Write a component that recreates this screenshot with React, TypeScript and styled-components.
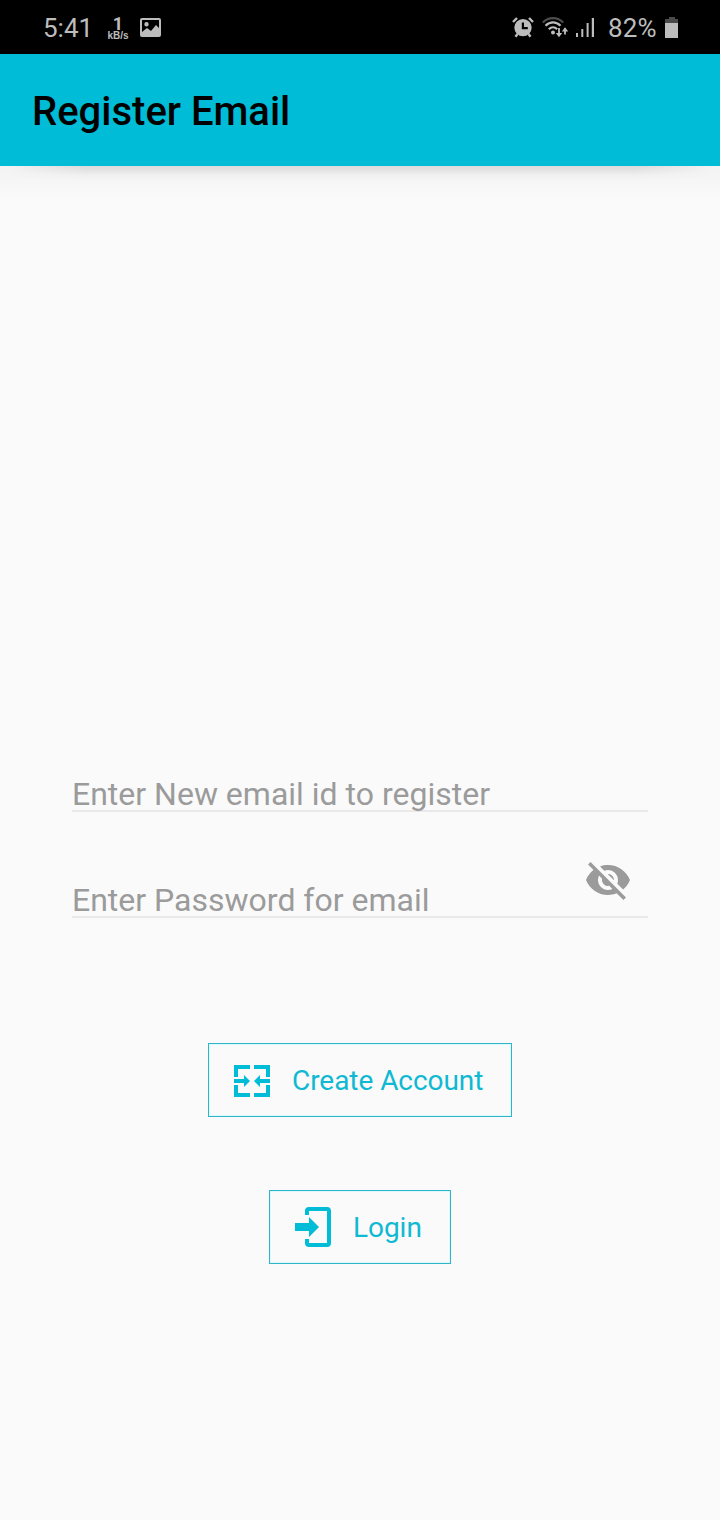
import React from 'react';
import styled, { createGlobalStyle } from 'styled-components';

const GlobalStyle = createGlobalStyle`
  * { box-sizing: border-box; }
  body { margin: 0; background: #fafafa; font-family: Roboto, "Liberation Sans", sans-serif; }
`;

const Screen = styled.div`
  width: 720px;
  height: 1520px;
  display: flex;
  flex-direction: column;
  background: #fafafa;
  overflow: hidden;
`;

const StatusBar = styled.header`
  height: 54px;
  flex: none;
  display: flex;
  align-items: center;
  padding: 2px 41px 0 43px;
  background: #000;
  color: #bdbdbd;
`;

const Clock = styled.span`
  width: 64px;
  font-size: 26px;
  line-height: 30px;
`;

const Speed = styled.div`
  width: 22px;
  margin-right: 11px;
  display: flex;
  flex-direction: column;
  align-items: center;
  font-weight: 700;
`;

const SpeedValue = styled.span`
  font-size: 18px;
  line-height: 16px;
  font-weight: 700;
`;

const SpeedUnit = styled.span`
  font-family: "Liberation Sans", sans-serif;
  font-size: 10px;
  line-height: 8px;
`;

const Spacer = styled.div`
  flex: 1;
`;

const Icon = styled.svg<{ $gap?: number }>`
  display: block;
  flex: none;
  fill: currentColor;
  margin-right: ${({ $gap = 0 }) => $gap}px;
`;

const Battery = styled.span`
  width: 57px;
  font-size: 26px;
  line-height: 30px;
  letter-spacing: 0.2px;
`;

const AppBar = styled.div`
  height: 112px;
  flex: none;
  display: flex;
  align-items: center;
  padding: 4px 32px 0;
  background: #00bcd7;
  color: #000;
`;

const Title = styled.h1`
  margin: 0;
  font-size: 40px;
  line-height: 48px;
  font-weight: 500;
`;

const BarShadow = styled.div`
  height: 34px;
  flex: none;
  background: linear-gradient(rgba(0, 0, 0, 0.026), rgba(0, 0, 0, 0.014) 50%, transparent);

  &::before {
    content: '';
    display: block;
    height: 14px;
    background: linear-gradient(rgba(0, 0, 0, 0.1), rgba(0, 0, 0, 0.075) 25%, rgba(0, 0, 0, 0.02) 65%, transparent);
    mask-image: linear-gradient(90deg, transparent 1%, #000 12%, #000 88%, transparent 99%);
  }
`;

const Form = styled.main`
  display: flex;
  flex-direction: column;
  align-items: center;
  padding: 574px 72px 0;
`;

const Field = styled.label<{ $height: number }>`
  width: 100%;
  height: ${({ $height }) => $height}px;
  display: flex;
  align-items: flex-end;
  justify-content: space-between;
  border-bottom: 2px solid #e9e9e9;
  color: #9b9b9b;
`;

const Hint = styled.span`
  font-size: 32px;
  line-height: 32px;
  white-space: nowrap;
`;

const ToggleEye = styled.span`
  padding: 0 16px 12px 0;
`;

const OutlineButton = styled.button<{ $width: number; $top: number }>`
  width: ${({ $width }) => $width}px;
  height: 74px;
  margin: ${({ $top }) => $top}px 0 0;
  padding: 0 0 0 24px;
  display: flex;
  align-items: center;
  border: 1px solid #2fb5c8;
  background: transparent;
  box-shadow: inset 0 0 0 1px #dcfafd;
  color: #0fb9d2;
  font-family: inherit;
  font-size: 28px;
  line-height: 34px;
`;

const ButtonLabel = styled.span`
  padding-top: 2px;
  letter-spacing: -0.05px;
`;

export default function App() {
  return (
    <Screen>
      <GlobalStyle />
      <StatusBar>
        <Clock>5:41</Clock>
        <Speed>
          <SpeedValue>1</SpeedValue>
          <SpeedUnit>kB/s</SpeedUnit>
        </Speed>
        <Icon width="21" height="20" viewBox="0 0 21 20">
          <path fillRule="evenodd" d="M2 0h17a2 2 0 0 1 2 2v15a2 2 0 0 1-2 2H2a2 2 0 0 1-2-2V2a2 2 0 0 1 2-2ZM2 2v12l5-4 4 3 5-6 3 3V2ZM6.500 4a2.200 2.200 0 1 1 0 4.400a2.200 2.200 0 0 1 0-4.400Z" />
        </Icon>
        <Spacer />
        <Icon width="22" height="22" viewBox="0 0 22 22" $gap={8}>
          <path fillRule="evenodd" d="M11 1.900a8.700 8.700 0 1 1 0 17.400A8.700 8.700 0 0 1 11 1.900ZM9.800 5.500v6.700h6v-2.200h-3.800V5.500Z" />
          <path d="M1 5 5 1M21 5 17 1M5.500 17l-2 2.800M16.500 17l2 2.800" stroke="currentColor" strokeWidth="2.400" />
        </Icon>
        <Icon width="26" height="22" viewBox="0 0 26 22" $gap={8}>
          <g fill="none" stroke="currentColor" strokeWidth="2.200">
            <path d="M.8 5.500C6.500-.3 15.500-.3 21.200 5.500" stroke="#4d4d4d" />
            <path d="M3.500 8.700C8 4.200 14 4.200 18.500 8.700M6.800 12.200c2.500-2.500 5.900-2.500 8.400 0" />
            <path d="M17 11v7M23 17.500v-6" strokeWidth="1.800" />
          </g>
          <circle cx="11" cy="15.500" r="2" />
          <path d="M13.800 16h6.400l-3.200 4.200ZM19.900 14.500h6.200l-3.100-4.200Z" />
        </Icon>
        <Icon width="18" height="20" viewBox="0 0 18 20" $gap={14}>
          <path d="M0 15h2v4H0ZM5.300 11h2v8h-2ZM10.600 5h2v14h-2ZM15.800 0h2.200v19h-2.200Z" />
        </Icon>
        <Battery>82%</Battery>
        <Icon width="14" height="22" viewBox="0 0 14 22">
          <path fill="#4a4a4a" d="M4 0h6v2h3v4H0V2h4Z" />
          <path d="M0 6h13v15H0Z" />
        </Icon>
      </StatusBar>
      <AppBar>
        <Title>Register Email</Title>
      </AppBar>
      <BarShadow />
      <Form>
        <Field $height={38}>
          <Hint>Enter New email id to register</Hint>
        </Field>
        <Field $height={106}>
          <Hint>Enter Password for email</Hint>
          <ToggleEye>
            <Icon width="48" height="48" viewBox="0 0 24 24">
              <path d="M12 7c2.760 0 5 2.240 5 5 0 .65-.13 1.260-.36 1.830l2.920 2.920c1.510-1.260 2.700-2.890 3.430-4.750-1.730-4.390-6-7.500-11-7.500-1.400 0-2.740.25-3.980.7l2.160 2.160C10.740 7.130 11.350 7 12 7zM2 4.270l2.280 2.280.46.46C3.080 8.300 1.780 10.020 1 12c1.730 4.390 6 7.500 11 7.500 1.550 0 3.030-.3 4.380-.84l.42.42L19.730 22 21 20.730 3.270 3 2 4.270zM7.530 9.800l1.550 1.550c-.05.21-.08.43-.08.65 0 1.660 1.340 3 3 3 .22 0 .44-.03.65-.08l1.550 1.550c-.67.33-1.410.53-2.200.53-2.760 0-5-2.240-5-5 0-.79.2-1.530.53-2.200zm4.310-.78l3.150 3.150.02-.16c0-1.660-1.340-3-3-3l-.17.01z" />
            </Icon>
          </ToggleEye>
        </Field>
        <OutlineButton $width={304} $top={125}>
          <Icon width="38" height="34" viewBox="0 -1 38 34" $gap={21}>
            <path fill="#00bcd7" d="M1 1h16v4H5v8H1ZM1 15h10v-4l6 6-6 6v-4H1ZM1 21h4v8h12v4H1ZM37 1H21v4h12v8h4ZM37 15H27v-4l-6 6 6 6v-4h10ZM37 21h-4v8H21v4h16Z" />
          </Icon>
          <ButtonLabel>Create Account</ButtonLabel>
        </OutlineButton>
        <OutlineButton $width={182} $top={73}>
          <Icon width="38" height="40" viewBox="0 0 38 40" $gap={21}>
            <path fill="#00bcd7" d="M1 16h14v-6l10 10-10 10v-6H1Z" />
            <path fill="none" stroke="#00bcd7" strokeWidth="4" d="M13 8V4a2 2 0 0 1 2-2h18a2 2 0 0 1 2 2v32a2 2 0 0 1-2 2H15a2 2 0 0 1-2-2v-4" />
          </Icon>
          <ButtonLabel>Login</ButtonLabel>
        </OutlineButton>
      </Form>
    </Screen>
  );
}
